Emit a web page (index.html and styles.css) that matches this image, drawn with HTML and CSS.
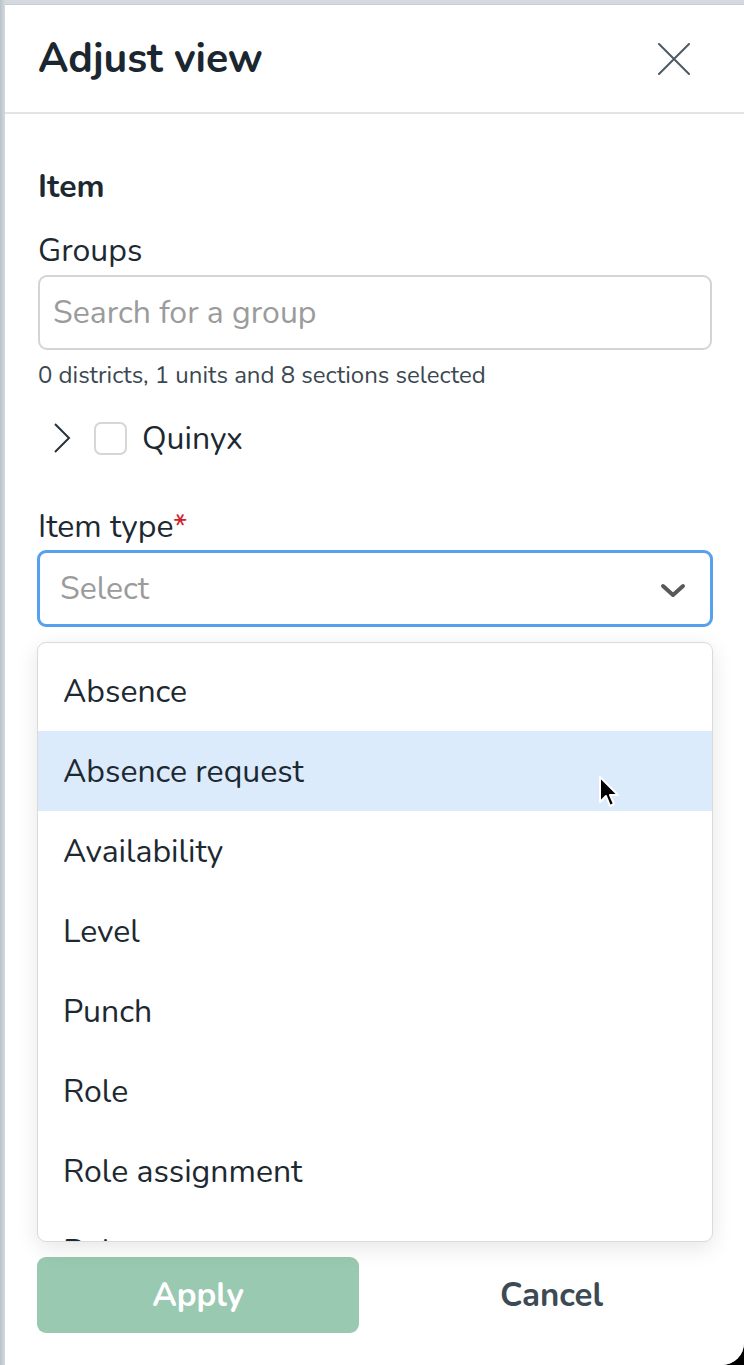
FILE: index.html
```html
<!DOCTYPE html>
<html lang="en">
<head>
<meta charset="utf-8">
<title>Adjust view</title>
<link rel="stylesheet" href="styles.css">
</head>
<body>
<div class="frame">
  <div class="panel">
    <header class="header">
      <h1 class="title">Adjust view</h1>
      <button class="close" aria-label="Close">
        <svg width="32" height="32" viewBox="0 0 32 32"><path d="M1 1 L31 31 M31 1 L1 31" stroke="#4b5a65" stroke-width="2" fill="none" stroke-linecap="round"/></svg>
      </button>
    </header>
    <main class="content">
      <h2 class="section">Item</h2>
      <label class="label">Groups</label>
      <div class="input"><span class="placeholder">Search for a group</span></div>
      <p class="helper">0 districts, 1 units and 8 sections selected</p>
      <div class="tree-row">
        <svg class="expander" width="18" height="30" viewBox="0 0 18 30"><path d="M2 1 L16 15 L2 29" stroke="#26323b" stroke-width="2" fill="none"/></svg>
        <span class="checkbox"></span>
        <span class="tree-text">Quinyx</span>
      </div>
      <label class="label label-type">Item type<span class="req">*</span></label>
      <div class="select-wrap">
        <div class="select">
          <span class="placeholder">Select</span>
          <svg class="chev" width="26" height="16" viewBox="0 0 26 16"><path d="M3 3 L13 12 L23 3" stroke="#595959" stroke-width="4" fill="none" stroke-linecap="round" stroke-linejoin="round"/></svg>
        </div>
        <ul class="menu">
          <li class="opt">Absence</li>
          <li class="opt opt-hover">Absence request
            <svg class="cursor" width="24" height="34" viewBox="0 0 24 34"><path d="M2 2 L2 27 L8 21 L12 31 L16 29 L12 20 L20 20 Z" fill="#000" stroke="#fff" stroke-width="2" stroke-linejoin="round"/></svg>
          </li>
          <li class="opt">Availability</li>
          <li class="opt">Level</li>
          <li class="opt">Punch</li>
          <li class="opt">Role</li>
          <li class="opt">Role assignment</li>
          <li class="opt">Roles</li>
        </ul>
      </div>
    </main>
    <footer class="footer">
      <button class="btn btn-apply">Apply</button>
      <button class="btn btn-cancel">Cancel</button>
    </footer>
  </div>
</div>
</body>
</html>
```
FILE: styles.css
```css
* { box-sizing: border-box; }
html, body { margin: 0; padding: 0; }
body {
  font-family: "Nunito", "Lato", "Noto Sans", sans-serif;
  color: #1d2931;
  background: #000;
  width: 744px;
  height: 1365px;
  overflow: hidden;
}
.frame {
  width: 744px;
  height: 1365px;
  background: linear-gradient(90deg, #b9c2c9 0, #d3d9de 5px);
  padding: 4px 0 0 5px;
  border-bottom-right-radius: 22px;
}
.panel {
  background: #fff;
  height: 100%;
  display: flex;
  flex-direction: column;
  border-bottom-right-radius: 22px;
  border-top: 1px solid #c6ced5;
}
.header {
  height: 109px;
  flex: none;
  display: flex;
  align-items: center;
  justify-content: space-between;
  padding: 0 54px 0 33px;
  border-bottom: 2px solid #e4e4e4;
}
.title {
  margin: 0;
  font-size: 41px;
  font-weight: 700;
  color: #1b2730;
}
.close {
  border: 0;
  background: none;
  padding: 0;
  width: 32px;
  height: 32px;
  display: flex;
}
.content {
  flex: 1;
  padding: 0 32px 0 33px;
  display: flex;
  flex-direction: column;
  align-items: stretch;
}
.section {
  margin: 0;
  padding-top: 56px;
  font-size: 32px;
  line-height: 34px;
  font-weight: 700;
}
.label {
  display: block;
  margin-top: 28px;
  font-size: 32px;
  line-height: 38px;
}
.input {
  margin-top: 5px;
  height: 75px;
  border: 2px solid #d4d4d4;
  border-radius: 9px;
  display: flex;
  align-items: center;
  padding: 0 13px;
}
.placeholder {
  font-size: 32px;
  color: #9b9b9b;
}
.helper {
  margin: 10px 0 0;
  font-size: 24px;
  line-height: 30px;
  color: #3b4852;
}
.tree-row {
  margin-top: 30px;
  display: flex;
  align-items: center;
  height: 36px;
  padding-left: 15px;
}
.expander { flex: none; }
.checkbox {
  width: 33px;
  height: 33px;
  border: 2px solid #d6d6d6;
  border-radius: 7px;
  margin-left: 23px;
  flex: none;
}
.tree-text {
  margin-left: 15px;
  font-size: 32px;
}
.label-type { margin-top: 52px; }
.req { color: #d0202a; }
.select-wrap {
  position: relative;
  margin-top: 4px;
}
.select {
  height: 77px;
  border: 3px solid #56a0ee;
  border-radius: 9px;
  margin-left: -1px;
  margin-right: -1px;
  display: flex;
  align-items: center;
  justify-content: space-between;
  padding: 0 24px 0 20px;
}
.chev { margin-top: 4px; }
.menu {
  position: absolute;
  left: -1px;
  right: -1px;
  top: 92px;
  height: 600px;
  margin: 0;
  padding: 8px 0 0;
  list-style: none;
  background: #fff;
  border: 1px solid #dadada;
  border-radius: 9px;
  box-shadow: 0 6px 22px rgba(0,0,0,0.10);
  overflow: hidden;
  z-index: 2;
}
.opt {
  height: 80px;
  display: flex;
  align-items: center;
  padding-left: 25px;
  font-size: 32px;
  position: relative;
}
.opt-hover { background: #dcebfc; }
.cursor {
  position: absolute;
  left: 560px;
  top: 44px;
}
.footer {
  flex: none;
  display: flex;
  padding: 0 0 32px 32px;
}
.btn {
  font-family: inherit;
  font-size: 33px;
  font-weight: 700;
  height: 76px;
  border: 0;
  border-radius: 9px;
  padding: 0;
}
.btn-apply {
  width: 322px;
  background: #99c9b0;
  color: #fff;
}
.btn-cancel {
  flex: 1;
  background: none;
  color: #3c4a54;
}
```
